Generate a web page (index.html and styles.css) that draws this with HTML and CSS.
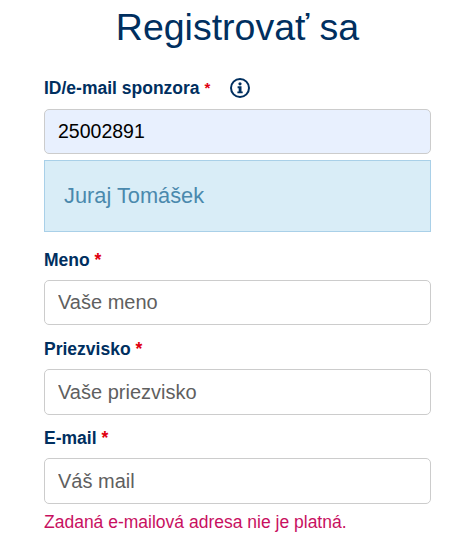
FILE: index.html
```html
<!DOCTYPE html>
<html lang="sk">
<head>
    <meta charset="UTF-8">
    <meta name="viewport" content="width=device-width, initial-scale=1.0">
    <title>Registrovať sa</title>
    <link rel="stylesheet" href="styles.css">
</head>
<body>
    <div class="form-container">
        <h2>Registrovať sa</h2>
        <div class="form-group sponsor-group">
            <div class="label-row">
                <label for="sponsor">ID/e-mail sponzora <span class="req req-small">*</span></label>
                <svg class="info-icon" width="22" height="22" viewBox="0 0 22 22" aria-hidden="true">
                    <circle cx="11" cy="11" r="9" fill="none" stroke="#002f5f" stroke-width="2"/>
                    <circle cx="11" cy="6.8" r="1.6" fill="#002f5f"/>
                    <path d="M8.6 9.3h3.9v5.1h1.2v1.9H8.4v-1.9h1.3v-3.2H8.6z" fill="#002f5f"/>
                </svg>
            </div>
            <input type="text" id="sponsor" class="filled" value="25002891">
        </div>
        <div class="sponsor-name">Juraj Tomášek</div>
        <div class="form-group">
            <label for="name">Meno <span class="req">*</span></label>
            <input type="text" id="name" placeholder="Vaše meno">
        </div>
        <div class="form-group tall">
            <label for="surname">Priezvisko <span class="req">*</span></label>
            <input type="text" id="surname" placeholder="Vaše priezvisko">
        </div>
        <div class="form-group tall">
            <label for="email">E-mail <span class="req">*</span></label>
            <input type="text" id="email" placeholder="Váš mail">
            <div class="error">Zadaná e-mailová adresa nie je platná.</div>
        </div>
    </div>
</body>
</html>
```

FILE: styles.css
```css
body {
    margin: 0;
    font-family: "Liberation Sans", Arial, sans-serif;
    background-color: #fff;
}
.form-container {
    width: 387px;
    margin-left: 44px;
}
.form-container h2 {
    margin: 0 0 26px;
    padding-top: 4px;
    font-size: 37.5px;
    line-height: 46px;
    font-weight: 400;
    text-align: center;
    color: #002f5f;
}
.label-row {
    display: flex;
    align-items: center;
    gap: 19px;
    height: 24px;
    margin-bottom: 9px;
}
.form-group .label-row label {
    margin: 0;
}
.info-icon {
    display: block;
}
.form-group {
    margin-bottom: 12px;
}
.form-group.sponsor-group {
    margin-bottom: 6px;
}
.form-group.tall {
    margin-bottom: 11px;
}
.form-group label {
    display: block;
    margin-bottom: 8px;
    font-size: 17.5px;
    line-height: 24px;
    font-weight: bold;
    color: #002f5f;
}
.req {
    color: #e0000f;
}
.req-small {
    font-size: 15px;
    vertical-align: 1px;
}
.form-group input {
    display: block;
    box-sizing: border-box;
    width: 100%;
    height: 45px;
    padding: 0 13px;
    border: 1px solid #ccc;
    border-radius: 5px;
    background: #fff;
    font-family: inherit;
    font-size: 20px;
    color: #000;
}
.form-group.tall input {
    height: 46px;
}
.form-group input::placeholder {
    color: #5f5f5f;
    opacity: 1;
}
.form-group input.filled {
    background-color: #e8f0fe;
    font-size: 19.5px;
}
.sponsor-name {
    box-sizing: border-box;
    height: 72px;
    margin-bottom: 16px;
    padding: 0 19px;
    border: 1px solid #a9d0e8;
    background-color: #d9edf7;
    font-size: 21.8px;
    line-height: 70px;
    color: #4a89ad;
}
.error {
    margin-top: 6px;
    font-size: 17.5px;
    line-height: 24px;
    color: #c8105f;
}
```
